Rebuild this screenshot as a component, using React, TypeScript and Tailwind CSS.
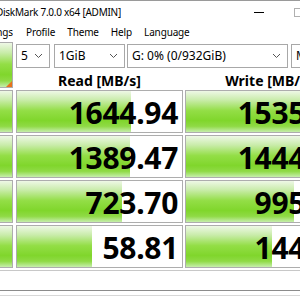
import React from "react";

const barGrad =
  "bg-[linear-gradient(to_bottom,#eef8e6_0%,#c9ecaa_22%,#93de46_48%,#80d62c_72%,#8fda45_86%,#c6eeac_100%)]";

type Row = { label: string; read: string; rf: number; write: string; wf: number };

const rows: Row[] = [
  { label: "SEQ1M Q8T1", read: "1644.94", rf: 0.69, write: "1535.39", wf: 0.7 },
  { label: "SEQ1M Q1T1", read: "1389.47", rf: 0.685, write: "1444.67", wf: 0.695 },
  { label: "RND4K Q32T16", read: "723.70", rf: 0.635, write: "995.21", wf: 0.657 },
  { label: "RND4K Q1T1", read: "58.81", rf: 0.455, write: "144.30", wf: 0.524 },
];

function Chevron() {
  return (
    <svg width="9" height="6" viewBox="0 0 9 6" className="shrink-0">
      <polyline points="1,1 4.5,4.5 8,1" fill="none" stroke="#555" strokeWidth="1" />
    </svg>
  );
}

function Combo({ text, w }: { text: string; w: string }) {
  return (
    <div
      className={`${w} h-[24px] border border-[#a8a8a8] bg-white flex items-center pl-[4px] pr-[6px] shrink-0`}
    >
      <span className="text-[12px] whitespace-nowrap overflow-hidden flex-1">{text}</span>
      <Chevron />
    </div>
  );
}

function Cell({ value, frac }: { value: string; frac: number }) {
  return (
    <div className="relative w-[167px] h-[43px] border border-[#adadad] bg-white shrink-0 overflow-hidden">
      <div className={`absolute left-0 top-0 bottom-0 ${barGrad}`} style={{ width: `${frac * 100}%` }} />
      <div className="relative h-full flex items-center justify-end pr-[4px] pt-[3px]">
        <span className="text-[30px] font-bold leading-none tracking-[-0.3px]">{value}</span>
      </div>
    </div>
  );
}

export default function App() {
  return (
    <div className="w-[300px] h-[300px] overflow-hidden bg-white text-black font-['Noto_Sans',sans-serif]">
      {/* Title bar */}
      <div className="h-[22px] border-t border-[#9a9a9a] flex items-center pt-[2px]">
        <div className="w-[121px] overflow-hidden flex justify-end shrink-0">
          <span className="text-[10px] whitespace-nowrap tracking-[-0.25px]">CrystalDiskMark 7.0.0 x64 [ADMIN]</span>
        </div>
        <div className="ml-auto flex items-center">
          <div className="w-[10px] h-px bg-black" />
          <div className="ml-[30px] w-[10px] h-[9px] border border-[#b0b0b0] mr-[-4px]" />
        </div>
      </div>

      {/* Menu bar */}
      <div className="h-[20px] flex items-center text-[10px] tracking-[-0.15px] whitespace-nowrap">
        <div className="w-[13px] overflow-hidden flex justify-end shrink-0">
          <span>Settings</span>
        </div>
        <span className="ml-[13px]">Profile</span>
        <span className="ml-[12px]">Theme</span>
        <span className="ml-[12px]">Help</span>
        <span className="ml-[12px]">Language</span>
      </div>

      {/* Main */}
      <div className="ml-[-60px] flex flex-col gap-[2px] mt-0">
        {/* Top section */}
        <div className="flex">
          <div className={`relative w-[73px] h-[46px] border border-[#adadad] shrink-0 ${barGrad}`}>
            <div className="h-full flex items-center justify-center text-[14px] font-bold text-white">All</div>
            <div className="absolute right-0 bottom-0 w-0 h-0 border-l-[6px] border-l-transparent border-b-[6px] border-b-[#e8721c]" />
          </div>
          <div className="ml-[3px] flex flex-col">
            <div className="flex mt-[2px]">
              <Combo text="5" w="w-[34px]" />
              <div className="ml-[4px]">
                <Combo text="1GiB" w="w-[71px]" />
              </div>
              <div className="ml-[2px]">
                <Combo text="G: 0% (0/932GiB)" w="w-[161px]" />
              </div>
              <div className="ml-[3px]">
                <Combo text="MB/s" w="w-[60px]" />
              </div>
            </div>
            <div className="flex h-[20px] items-center pt-[5px]">
              <div className="w-[167px] text-center text-[14px] font-bold">Read [MB/s]</div>
              <div className="ml-[2px] w-[167px] text-center text-[14px] font-bold">Write [MB/s]</div>
            </div>
          </div>
        </div>

        {/* Data rows */}
        {rows.map((r) => (
          <div key={r.label} className="flex">
            <div className={`w-[73px] h-[43px] border border-[#adadad] shrink-0 ${barGrad} flex items-center justify-center`}>
              <span className="text-[12px] font-bold text-white leading-tight text-center">{r.label}</span>
            </div>
            <div className="ml-[3px]">
              <Cell value={r.read} frac={r.rf} />
            </div>
            <div className="ml-[2px]">
              <Cell value={r.write} frac={r.wf} />
            </div>
          </div>
        ))}

        {/* Comment box */}
        <div className="w-[420px] h-[21px] border-t border-[#c8c8c8] border-b border-b-[#8c8c8c] bg-white" />
        <div className="w-[420px] h-[3px] border-b border-[#d8d8d8]" />
      </div>
    </div>
  );
}
